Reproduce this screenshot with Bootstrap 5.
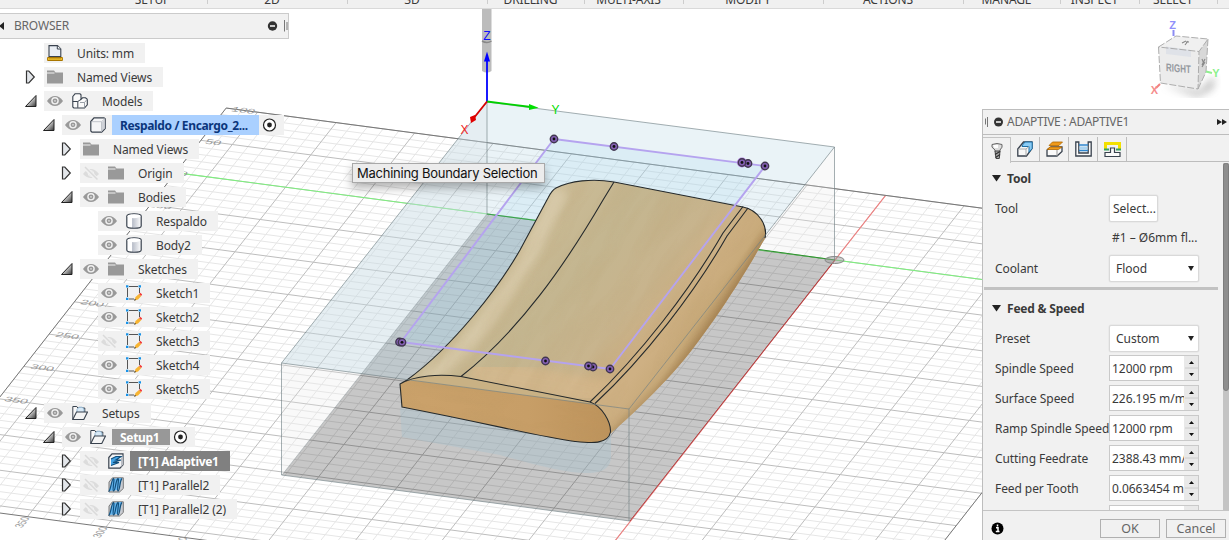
<!DOCTYPE html>
<html lang="en">
<head>
<meta charset="utf-8">
<title>Adaptive toolpath</title>
<link href="https://cdn.jsdelivr.net/npm/bootstrap@5.3.0/dist/css/bootstrap.min.css" rel="stylesheet">
<style>
body{font-family:"Noto Sans","Open Sans",sans-serif;font-size:12px;color:#3a3a3a;line-height:20px;background:#fff}
.ribbon{height:9px;background:#f0f0f0;border-bottom:1px solid #d9d9d9}
.ribbon-cell{flex:none;height:4px;line-height:17px;border-right:1px solid #cdcdcd;padding-right:11px}
.ribbon-cell span{display:block;margin-top:-9px;white-space:nowrap;font-size:12px;letter-spacing:-.1px}
.scene{inset:0;width:1229px;height:531px}
.browser-pane{width:289px;padding-top:4px}
.browser-head{height:26px;margin-bottom:2px;background:#f1f1f1;border:2px solid #cbcbcb;border-width:1.5px 1.5px 1.5px 0;color:#666;font-size:12px;letter-spacing:-.2px}
#tree{letter-spacing:-.12px}
.tree-row{height:24px}
.twist{width:12px;height:14px;margin-right:7px;flex:none}
.chip{height:20px;background:#f1f1f1;padding-left:3px;flex:none}
.chip svg{width:16px;height:16px;flex:none}
.chip .eye{margin-right:9px}
.tag{margin-left:6px;padding:0 11px 0 8px;height:20px;line-height:21px;white-space:nowrap}
.tag-blue{background:#aad0ff;color:#0b367c;font-weight:700;letter-spacing:-.35px}
.tag-mid{background:#989898;color:#fff;font-weight:700;height:16px;line-height:17px;letter-spacing:-.3px}
.tag-dark{background:#808080;color:#fff;font-weight:700;letter-spacing:-.33px}
.side{width:247px;height:431px;background:#f1f1f1;border-left:1px solid #bdbdbd;border-top:1px solid #bdbdbd}
.side-head{height:25px;border-bottom:1px solid #bdbdbd;color:#666;padding-left:2px;padding-right:2px;letter-spacing:-.28px}
.tabs{height:28px;padding-top:2px}
.tabs>div{width:29px;border-right:1px solid #bdbdbd;height:24px;display:flex;align-items:center;justify-content:center}
.tabs .on{height:26px;width:28px;border-top:1px solid #c4c4c4;border-right-color:#c4c4c4}
.tabs-wrap{background:linear-gradient(#bdbdbd,#bdbdbd) 27px 26px/100% 1px no-repeat}
.scroll-area{height:347px}
.line{height:30px;padding-left:12px}
.line>label{width:114px;white-space:nowrap;letter-spacing:-.08px;padding-top:1px}
.sect{height:30px;padding:1px 0 0 9px;font-weight:700;letter-spacing:-.2px}
.rule{height:3px;margin:4px 0 3px 1px;width:234px;background:#c2c2c2}
.pick{height:27px;width:90px;background:#fff;border:1px solid #d9d9d9;border-radius:2px;padding:1px 6px 0;box-shadow:0 0 0 .5px #e3e3e3}
.num{height:26px;width:90px;background:#fff;border:1px solid #c9c9c9}
.num .val{width:75px;padding:1px 0 0 2px;white-space:nowrap;overflow:hidden;letter-spacing:-.05px}
.spin{width:14px;background:#e9e9e9}
.bar{width:6px;background:#c4c4c4}
.thumb{height:228px;background:#8e8e8e;border-radius:3px 3px 4px 4px;border:1px solid #7d7d7d}
.foot{height:30px;border-top:1px solid #c4c4c4;padding:8px 3px 0 8px}
.dlg{width:60px;height:19px;border:1px solid #b0b0b0;color:#666;background:#f1f1f1;line-height:17px;text-align:center;font-size:12.5px}
.tip{left:352px;top:154px;width:193px;height:20px;background:#ececec;border:1px solid #a8a8a8;color:#111;font:13px/19px Inter,"Liberation Sans",sans-serif;letter-spacing:-.25px;padding-left:4px;white-space:nowrap;box-shadow:0 5px 10px rgba(0,0,0,.3)}
</style>
</head>
<body class="vh-100 overflow-hidden d-flex flex-column">
<svg width="0" height="0" class="position-absolute">
  <defs>
    <linearGradient id="gt" x1="0" y1="0" x2="1" y2="1"><stop offset=".35" stop-color="#eee"/><stop offset="1" stop-color="#333"/></linearGradient>
    <linearGradient id="gc"><stop offset="0" stop-color="#fff"/><stop offset=".35" stop-color="#fff"/><stop offset=".4" stop-color="#b9bec9"/><stop offset="1" stop-color="#fff"/></linearGradient>
  </defs>
  <symbol id="closed" viewBox="0 0 12 14"><path d="M1.500 1h2.300l5.500 6-5.500 6H1.500z" fill="#e3e6ea" stroke="#333" stroke-width="1.200"/></symbol>
  <symbol id="open" viewBox="0 0 12 14"><path d="M.5 12.500H11V1.500z" fill="url(#gt)" stroke="#222"/></symbol>
  <symbol id="eye" viewBox="0 0 16 16"><path d="M0 8Q3.500 3 8 3t8 5q-3.500 5-8 5T0 8z" fill="#999"/><circle cx="8" cy="7.800" r="3.100" fill="#999" stroke="#f1f1f1" stroke-width="1.400"/><circle cx="8" cy="7.800" r=".9" fill="#ddd"/></symbol>
  <symbol id="hid" viewBox="0 0 16 16"><path d="M0 9Q4 4 8 4t8 5q-3.500 4-8 4T0 9z" fill="#dcdcdc"/><circle cx="8" cy="8.500" r="2.800" fill="none" stroke="#f1f1f1"/><path d="M1 1.500l14 14" stroke="#f1f1f1" stroke-width="4"/><path d="M2 2l12.500 12.500" stroke="#dadada" stroke-width="1.500"/></symbol>
  <symbol id="folder" viewBox="0 0 16 16"><path d="M0 1.500h7l1.500 2H16v11H0z" fill="#999"/><path d="M0 4h7.500" stroke="#f1f1f1"/></symbol>
  <symbol id="doc" viewBox="0 0 16 16"><path d="M2 11.500V.6h8.500L13.800 4v7.500z" fill="#e9edf3" stroke="#39424e" stroke-width="1.100"/><path d="M10.300.8V4h3.500" fill="#fff" stroke="#39424e"/><path d="M.6 12.500h14.800v3H.6z" fill="#f7c52d" stroke="#a97600"/><path d="M3 13v1.500m2-1.500v1.500m2-1.500v1.500m2-1.500v1.500m2-1.500v1.500m2-1.500v1.500" stroke="#8a6200" stroke-width=".7"/></symbol>
  <symbol id="models" viewBox="0 0 16 16"><path d="M.8 3.500L3 .8h5l1 1v4.500l1.500-1.500h3l1.800 1.500v5.500L12.500 15H1.800l-1-1z" fill="#fafafa" stroke="#39424e" stroke-width="1.100"/><path d="M.8 8.500h5v6.300M5.800 8.500L9 6.300M6 8.500" fill="none" stroke="#39424e"/><path d="M8 9.500h4.500v5M12.500 9.500L15 6.500" fill="none" stroke="#9aa0a8"/></symbol>
  <symbol id="cube" viewBox="0 0 16 16"><path d="M.8 4.500L4 .8h10l1.200 1v9.700L11.700 15.200H2L.8 14z" fill="#f4f5f7" stroke="#39424e" stroke-width="1.200"/><path d="M1.500 4.700h10v10M11.500 4.700L15 1.500" fill="none" stroke="#c0c4ca"/><path d="M12 5l2.700-2.700v9L12 14z" fill="#cfd2d8"/></symbol>
  <symbol id="cyl" viewBox="0 0 16 16"><path d="M.8 3C.8 0 15.200 0 15.200 3v10c0 3-14.400 3-14.400 0z" fill="url(#gc)" stroke="#39424e" stroke-width="1.200"/><ellipse cx="8" cy="3.200" rx="6.500" ry="2" fill="#fff"/></symbol>
  <symbol id="sketch" viewBox="0 0 16 16"><path d="M3 1.500h9M13.500 3v5M1.500 3v9M3 14h5" fill="none" stroke="#555" stroke-width="1"/><path d="M0 .2h2.400v2.300H0zM12.600.2H15v2.300h-2.400zM0 12.700h2.400V15H0z" fill="#1792e8"/><path d="M8.500 15.500l1-3.500 3.500-3 2.300 2L12 14.500z" fill="#f7b432"/><path d="M8 15.800l.8-2 1.300 1.300z" fill="#333"/><path d="M13 9l1.300-1.300 2 1.700-1.200 1.600z" fill="#f23c3c"/></symbol>
  <symbol id="setup" viewBox="0 0 16 16"><path d="M.8 14.500V1.500h4l1 1.500h7v4" fill="#f8f8f8" stroke="#39424e"/><path d="M5 8V4.500l2-2.300h3L12 4v4z" fill="#d8e9f6" stroke="#7da7c7" stroke-width=".8"/><path d="M.8 14.500L4.500 7h11L11.800 14.500z" fill="#f4f4f4" stroke="#39424e" stroke-width="1.100"/></symbol>
  <symbol id="adapt" viewBox="0 0 16 16"><path d="M.8 4.500L4 .8h11v11L12 15.200H.8z" fill="#f4f5f7" stroke="#39424e" stroke-width="1.200"/><path d="M13 5l2-3v9.500L13 14z" fill="#b9bdc4"/><path d="M3 6l5-2.500h5L8 7h5L5 9.500h6L3 12.500" fill="#45a4e6" stroke="#124f7c" stroke-width="1.200"/></symbol>
  <symbol id="para" viewBox="0 0 16 16"><path d="M1 5L4.500.8H15.300v10.700L11.500 15H1z" fill="#c9ccd2" stroke="#777"/><path d="M1 14L4.500 3 8 1.500l6-.5L10 13z" fill="#62b4ee"/><path d="M.5 14.500C3 14 3 3 5.500 1.500c1.500 0-1.500 12 0 12.500C7.500 14 7.500 3 10 1.500c1.500 0-1.500 12 0 12.500 2 0 1.500-10 4-12.500" fill="none" stroke="#124f7c" stroke-width="1.200"/></symbol>
</svg>

<header class="ribbon d-flex overflow-hidden flex-shrink-0 text-center" id="ribbon"></header>

<main class="position-relative flex-grow-1 d-flex justify-content-between">
  <svg class="scene position-absolute" viewBox="0 9 1229 531">
    <defs>
      <linearGradient id="wood" x1=".1" y1=".3" x2=".85" y2=".75"><stop offset="0" stop-color="#d3c19c"/><stop offset=".15" stop-color="#cdbd98"/><stop offset=".4" stop-color="#c4b690"/><stop offset=".62" stop-color="#c8b48d"/><stop offset=".78" stop-color="#cfae80"/><stop offset="1" stop-color="#c29a66"/></linearGradient>
      <linearGradient id="front" x1="0" y1="0" x2="1" y2="0"><stop offset="0" stop-color="#cba26b"/><stop offset=".6" stop-color="#c79e67"/><stop offset="1" stop-color="#bd925a"/></linearGradient>
      <linearGradient id="round" gradientUnits="userSpaceOnUse" x1="672" y1="318" x2="708" y2="342"><stop offset="0" stop-color="#ceb083"/><stop offset=".55" stop-color="#c8aa7a"/><stop offset="1" stop-color="#a5804f"/></linearGradient>
      <filter id="grain" x="0" y="0" width="1" height="1"><feTurbulence type="fractalNoise" baseFrequency=".012 .06" numOctaves="3" seed="4"/><feColorMatrix values="0 0 0 0 .45 0 0 0 0 .3 0 0 0 0 .12 0 .9 0 0 -.33"/></filter>
      <filter id="soft"><feGaussianBlur stdDeviation="4"/></filter>
      <clipPath id="bodyClip"><path d="M400 384L407 380C455 345 500 285 520 250L548 198Q552 190 556 188C570 181 592 178 614 182L743 207C758 210 768 225 765 238C745 275 700 345 668 378Q640 408 611 433L590 442L402 407z"/></clipPath>
      <clipPath id="faceClip"><path d="M400 384C415 375 440 374 461 376.500L590 402C602 406 611 422 610.500 432C608 445 590 443 575 441.500C540 437 500 426 402 407z"/></clipPath>
    </defs>
    <g id="grid" transform="matrix(78.5 10.4 -25.3 32.3 835 260)" fill="none"></g>
    <g id="marks" fill="#999" font-size="12" font-family="Liberation Sans, sans-serif" text-anchor="middle"></g>

    <path d="M487 214L835 260 630 521 282 475z" fill="#000" fill-opacity=".22"/>
    <path d="M281.500 363L487 102V214L282 475zM834.500 147V260L757 250L765 236z" fill="#e8e8e8" fill-opacity=".25"/>
    <path d="M487 102L834.500 147 629 409 281.500 363z" fill="#a9cedd" fill-opacity=".24"/>
    <path d="M554 139L765 166 610 369 401 342z" fill="#a0d8f0" fill-opacity=".2"/>
    <path d="M400 408L402 437 500 455C540 466 570 474 590 473Q612 472 611 455V432L560 425z" fill="#a8c4d0" fill-opacity=".4"/>
    <path d="M487 214L540 221" stroke="#3a9d4a"/><path d="M755 249L835 260" stroke="#2f8f2f"/>
    <path d="M835 260L630 521" stroke="#a33" stroke-opacity=".8"/>
    <ellipse cx="834.500" cy="260" rx="9.500" ry="3.500" fill="#999" fill-opacity=".5" stroke="#888"/>

    <g clip-path="url(#bodyClip)">
      <path d="M390 170H780V450H390z" fill="url(#wood)"/>
      <path d="M425 380Q500 330 560 190" fill="none" stroke="#dccfb0" stroke-width="16" filter="url(#soft)" opacity=".7"/>
      <path d="M470 370L620 395" stroke="#d8b98d" stroke-width="26" filter="url(#soft)" opacity=".7"/>
      <path d="M590 402C640 355 700 285 745 206L775 206V300L640 440 590 442z" fill="url(#round)"/>
      <path d="M768 238C745 278 700 348 668 382Q640 410 611 437" fill="none" stroke="#8d6a3d" stroke-width="6" filter="url(#soft)" opacity=".6"/>
      <g transform="rotate(-57 580 300)"><rect x="380" y="90" width="420" height="420" filter="url(#grain)" opacity=".3"/></g>
    </g>
    <g clip-path="url(#faceClip)">
      <path d="M390 370H620V450H390z" fill="url(#front)"/>
      <g transform="rotate(6 500 410)"><rect x="380" y="350" width="250" height="110" filter="url(#grain)" opacity=".4"/></g>
      <path d="M400 384C415 375 440 374 461 376.500L590 402 600 405 400 379z" fill="#c9b184"/>
    </g>
    <g fill="none" stroke="#252a2c" stroke-width="1.100">
      <path d="M407 380C455 345 500 285 520 250L548 198Q552 190 556 188C570 181 592 178 614 182L743 207C758 210 768 225 765 238"/>
      <path d="M400 384C415 375 440 374 461 376.500L590 402C602 406 611 422 610.500 432C608 445 590 443 575 441.500C540 437 500 426 402 407zM400 384L407 380"/>
      <path d="M461 376.500C520 330 565 265 603 200L614 182"/>
      <path d="M590 402C640 355 690 290 723 233L743 206.500M595 403.500C645 357 695 292 727 236L748 208"/>
    </g>
    <g fill="none" stroke="#6f7f85" stroke-opacity=".7" stroke-width=".9">
      <path d="M487 102L834.500 147 629 409 281.500 363z"/><path d="M487 102V214M834.500 147V260M629 409V521M281.500 363V475L630 521"/><path d="M487 214L282 475" stroke-opacity=".4"/>
    </g>
    <path d="M554 139L765 166 610 369 401 342z" fill="none" stroke="#b5a3ef" stroke-width="1.900"/>
    <circle cx="742" cy="162.500" r="5" fill="#b07be0"/>
    <g id="dots"></g>

    <path d="M482 9H491.500V71Q487 74 482 71z" fill="#bcbcbc"/><path d="M482 41Q487 44 491.500 41" stroke="#888" stroke-width="1.500" fill="none"/>
    <path d="M487 102V58" stroke="#00f" stroke-width="1.800"/><path d="M484 61.500L487 51.500 490 61.500z" fill="#00f"/>
    <path d="M487 101.500L531 107" stroke="#00d000" stroke-width="1.800"/><path d="M529 104L538.500 107.800 529 110z" fill="#00e000"/>
    <path d="M487 101.500L473 119" stroke="#d80000" stroke-width="1.800"/><path d="M470 117l5-2 1 5-5 3z" fill="#e00000"/>
    <g font-family="Liberation Sans, sans-serif" font-size="12" text-anchor="middle"><text x="487" y="40" fill="#11f">Z</text><text x="555.500" y="114" fill="#0d0">Y</text><text x="464.500" y="133.500" fill="#e22">X</text></g>

    <path d="M1162 84L1200 92 1215 76 1212 88 1198 96z" fill="#777" filter="url(#soft)" opacity=".7"/>
    <path d="M1158.500 47L1176 36 1208 39 1199 51.500z" fill="#f0f0f0"/><path d="M1158.500 47L1199 51.500 1198 89 1160.500 83z" fill="#ececec"/><path d="M1199 51.500L1208 39 1206 72 1198 89z" fill="#d8d8d8"/>
    <path d="M1166 46.500L1191 50V57L1166 54z" fill="#dfe2e8"/>
    <path d="M1158.500 47L1176 36 1208 39 1199 51.500zM1158.500 47L1160.500 83 1198 89 1199 51.500M1208 39L1206 72 1198 89" fill="none" stroke="#a5a5a5" stroke-dasharray="7 2" stroke-width=".9"/>
    <text transform="matrix(1 .09 .02 1 1166 71)" font-family="Liberation Sans, sans-serif" font-weight="700" font-size="11" fill="#969aa0" textLength="25" lengthAdjust="spacingAndGlyphs">RIGHT</text>
    <path d="M1182 43l4-2m-1 4l3-4m-2 1h3M1202 65l3-6m-3 0l2 5m-2 3l3-5" stroke="#888" stroke-width="1.100"/>
    <path d="M1173.500 30V36" stroke="#8c8cf2" stroke-width="2"/><path d="M1206 71.500l6 1.500" stroke="#8ff08f" stroke-width="2"/><path d="M1160 84l-4 4" stroke="#f08080" stroke-width="2"/>
    <g font-family="Liberation Sans, sans-serif" font-size="11" font-weight="700" text-anchor="middle"><text x="1172.500" y="28.500" fill="#9090fa">Z</text><text x="1216" y="77" fill="#8cf08c">Y</text><text x="1154.500" y="93.500" fill="#f58c8c">X</text></g>
  </svg>

  <section class="browser-pane position-relative">
    <div class="browser-head d-flex align-items-center">
      <svg width="5" height="8"><path d="M4 0v8L-1 4z" fill="#222"/></svg>
      <span style="margin-left:9px">BROWSER</span>
      <svg class="ms-auto" width="22" height="14"><circle cx="6.500" cy="7" r="4.700" fill="#333"/><path d="M4 7h5" stroke="#fff" stroke-width="1.500"/><path d="M18.500 1v11.500M21 3v8" stroke="#777"/></svg>
    </div>
    <div id="tree"></div>
  </section>

  <aside class="side position-relative align-self-end d-flex flex-column">
    <div class="side-head d-flex align-items-center">
      <svg width="22" height="14"><path d="M.5 3.500v6M2.500 2v10" stroke="#777"/><circle cx="13.500" cy="7" r="4.500" fill="#333"/><path d="M11 7h5" stroke="#fff" stroke-width="1.500"/></svg>
      <span>ADAPTIVE : ADAPTIVE1</span>
      <svg class="ms-auto" width="10" height="8"><path d="M0 1l5 3-5 3zM5 1l5 3-5 3z" fill="#222"/></svg>
    </div>
    <div class="tabs-wrap"><div class="tabs d-flex">
      <div class="on"><svg width="16" height="18" viewBox="0 0 16 18"><path d="M3 2.500Q8 .5 13 2.500v2.700L11 8v1.500H6V8L3 5.200z" fill="#ddd" stroke="#666"/><path d="M4 3h5v3H5.500z" fill="#fff"/><path d="M6 9h5l-.7 7.500H7z" fill="#aaa" stroke="#444"/><path d="M6 12.500l5-3M6.500 15.500l4.500-3" stroke="#333" stroke-width="1.300"/></svg></div>
      <div><svg width="16" height="16" viewBox="0 0 16 16"><path d="M.8 8L6.500 1H15v6.500L9.500 15H.8z" fill="#f7f7f7" stroke="#39424e" stroke-width="1.300"/><path d="M5.500 4L8 1h7.200v6.500L12 11.300V5.500H5z" fill="#8accf5" stroke="#1e6fa5"/><path d="M1.500 8H9v6.500M9 8l3-2.500" fill="none" stroke="#aaa"/></svg></div>
      <div><svg width="17" height="16" viewBox="0 0 17 16"><path d="M1 9l4-3h11v4.500L11 15H1z" fill="#fafafa" stroke="#39424e" stroke-width="1.300"/><path d="M1 8.500L4 6h12l-3.500 2.500zM3 4.500L6.500 1h10L13 4.500z" fill="#f09a1a" stroke="#b06800" stroke-width=".8"/><path d="M11 9v6" stroke="#999"/></svg></div>
      <div><svg width="17" height="16" viewBox="0 0 17 16"><path d="M.8 1h3v11h9.400V1h3v14H.8z" fill="#fafafa" stroke="#39424e" stroke-width="1.300"/><path d="M4 4h9M4 9.500h9" stroke="#2f86cf" stroke-width="1.500"/><path d="M4.500 5.500h8v3h-8z" fill="#a9d4f2"/></svg></div>
      <div><svg width="17" height="17" viewBox="0 0 17 17"><path d="M1.500 8V2.500h14V8" fill="none" stroke="#f3e000" stroke-width="3"/><path d="M0 8.500h5M12 8.500h5" stroke="#39a060" stroke-width="2"/><path d="M1 11.500h5.500V7h4v4.500H16v4H1z" fill="#fafafa" stroke="#39424e" stroke-width="1.200"/></svg></div>
    </div></div>
    <div class="scroll-area d-flex overflow-hidden">
      <div class="flex-grow-1" id="form"></div>
      <div class="bar"><div class="thumb"></div></div>
    </div>
    <div class="foot d-flex mt-auto">
      <svg width="13" height="13" style="margin-top:3px"><circle cx="6.500" cy="6.500" r="6" fill="#000"/><path d="M6.500 2.500v2M5 5.800h2v4M4.800 9.500h3.700" fill="none" stroke="#fff" stroke-width="1.500"/></svg>
      <div class="dlg ms-auto">OK</div><div class="dlg" style="margin-left:6px">Cancel</div>
    </div>
  </aside>
  <div class="tip position-absolute">Machining Boundary Selection</div>
</main>
<script src="https://cdn.jsdelivr.net/npm/bootstrap@5.3.0/dist/js/bootstrap.bundle.min.js"></script>
<script>
const $ = id => document.getElementById(id);

// toolbar group captions, their widths and left margins
const groups = [['SETUP',99,109],['2D',140],['3D',140],['DRILLING',97],['MULTI-AXIS',99],['MODIFY',140],['ACTIONS',140],['MANAGE',97],['INSPECT',79],['SELECT',78]];
$('ribbon').innerHTML = groups.map(([t,w,m]) => `<div class="ribbon-cell" style="width:${w}px;margin-left:${m||0}px"><span>${t}</span></div>`).join('');

// ground plane: 50 mm squares divided in five
let grid = '';
const seg = (a,b,c,d,col,w) => grid += `<path d="M${a} ${b}L${c} ${d}" stroke="${col}" stroke-width="${w}" vector-effect="non-scaling-stroke"/>`;
for (let pass = 0; pass < 2; pass++) {
  for (let i = -42; i <= 19; i++) if ((i % 5 === 0) == pass) seg(i/5,-2,i/5,10.2, pass ? '#bdbdbd' : '#e6e6e6', 1);
  for (let j = -10; j <= 50; j++) if ((j % 5 === 0) == pass) seg(-8.4,j/5,3.8,j/5, pass ? '#bdbdbd' : '#e6e6e6', 1);
}
seg(-8.4,0,3.8,0,'#7df07d',1.1);
seg(0,-2,0,10.2,'#f08080',1.1);
grid += '<path d="M-8.4-2H3.8V10.2H-8.4z" stroke="#777" stroke-width="1" vector-effect="non-scaling-stroke"/>';
$('grid').innerHTML = grid;

const marks = [['100',242,112.5],['50',212,144.5],['0',182,176],['150',159,208],['200',91,305.5],['250',66,338],['300',41,370],['350',15,402.5]];
$('marks').innerHTML = marks.map(([t,x,y]) => `<text transform="matrix(1.15 .15 -.35 .55 ${x} ${y})">${t}</text>`).join('')
  + [['350',26,523],['300',104,533],['250',184,543]].map(([t,x,y]) => `<text transform="matrix(.4 -.5 .95 .15 ${x} ${y})">${t}</text>`).join('');

$('dots').innerHTML = [[554,139],[614,146.5],[748,163.5],[742,162.5],[765,166],[399.5,342],[402,342.3],[545.5,361],[593,367],[588.5,366],[610,369]]
  .map(([x,y]) => `<circle cx="${x}" cy="${y}" r="3.700" fill="#8560b5" stroke="#41374f" stroke-width="1.400"/><circle cx="${x}" cy="${y}" r="1.400" fill="#111"/>`).join('');

// browser rows: level, twist, visibility, icon, caption, tag class, active marker
const rows = [
 [0,'','','doc','Units: mm'],[0,'closed','','folder','Named Views'],[0,'open','eye','models','Models'],
 [1,'open','eye','cube','Respaldo / Encargo_2...','tag-blue',1],[2,'closed','','folder','Named Views'],
 [2,'closed','hid','folder','Origin'],[2,'open','eye','folder','Bodies'],[3,'','eye','cyl','Respaldo'],[3,'','eye','cyl','Body2'],
 [2,'open','eye','folder','Sketches'],[3,'','eye','sketch','Sketch1'],[3,'','eye','sketch','Sketch2'],[3,'','hid','sketch','Sketch3'],
 [3,'','eye','sketch','Sketch4'],[3,'','eye','sketch','Sketch5'],[0,'open','eye','setup','Setups'],
 [1,'open','eye','setup','Setup1','tag-mid',1],[2,'closed','hid','adapt','[T1] Adaptive1','tag-dark'],
 [2,'closed','hid','para','[T1] Parallel2'],[2,'closed','hid','para','[T1] Parallel2 (2)']];
const use = (id,c='') => `<svg class="${c}"><use href="#${id}"/></svg>`;
const target = '<svg style="margin:0 7px 0 3px;width:15px" viewBox="0 0 15 16"><circle cx="7.500" cy="8" r="6" fill="#fff" stroke="#222" stroke-width="1.200"/><circle cx="7.500" cy="8" r="2.400" fill="#222"/></svg>';
$('tree').innerHTML = rows.map(([l,t,e,ic,txt,cls,act]) => `<div class="tree-row d-flex align-items-center" style="padding-left:${25+18*l}px">
 <svg class="twist">${t?`<use href="#${t}"/>`:''}</svg><div class="chip d-flex align-items-center">${e?use(e,'eye'):''}${use(ic)}<span class="tag ${cls||''}">${txt}</span>${act?target:''}</div></div>`).join('');

const sect = t => `<div class="sect d-flex align-items-center"><svg width="9" height="7" style="margin-right:6px"><path d="M0 0h9L4.500 6.500z" fill="#222"/></svg>${t}</div>`;
const line = (l,c) => `<div class="line d-flex align-items-center"><label>${l}</label>${c}</div>`;
const pick = t => `<div class="pick d-flex align-items-center justify-content-between">${t}<svg width="6" height="5" style="margin-right:-2px"><path d="M0 0h6L3 5z" fill="#222"/></svg></div>`;
const num = t => `<div class="num d-flex"><div class="val d-flex align-items-center">${t}</div><svg class="spin" height="24"><path d="M5 8l2.500-3L10 8zM5 17h5l-2.500 3z" fill="#111"/><path d="M1 12h13" stroke="#ccc"/></svg></div>`;
$('form').innerHTML = sect('Tool') + line('Tool','<div class="pick text-nowrap d-flex align-items-center" style="width:49px;padding:1px 2px 0 3px">Select...</div>')
 + line('','<span class="text-nowrap" style="padding-left:3px">#1 – Ø6mm fl...</span>') + line('Coolant',pick('Flood')) + '<div class="rule"></div>'
 + sect('Feed &amp; Speed') + line('Preset',pick('Custom'))
 + [['Spindle Speed','12000 rpm'],['Surface Speed','226.195 m/min'],['Ramp Spindle Speed','12000 rpm'],['Cutting Feedrate','2388.43 mm/min'],['Feed per Tooth','0.0663454 mm'],['','']].map(([a,b]) => line(a,num(b))).join('');
</script>
</body>
</html>
